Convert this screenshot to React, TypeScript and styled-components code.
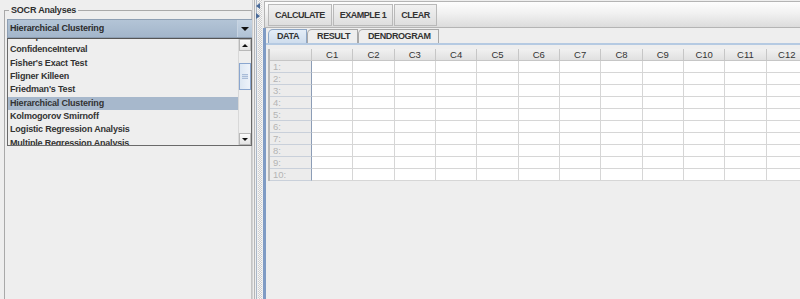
import React, { FC } from 'react';
import styled, { createGlobalStyle } from 'styled-components';

const analyses = [
  'Chi-Square Test',
  'ConfidenceInterval',
  "Fisher's Exact Test",
  'Fligner Killeen',
  "Friedman's Test",
  'Hierarchical Clustering',
  'Kolmogorov Smirnoff',
  'Logistic Regression Analysis',
  'Multiple Regression Analysis',
];

const selected = 'Hierarchical Clustering';
const actions = ['CALCULATE', 'EXAMPLE 1', 'CLEAR'];
const tabs = ['DATA', 'RESULT', 'DENDROGRAM'];
const columns = Array.from({ length: 12 }, (_, i) => `C${i + 1}`);
const rows = Array.from({ length: 10 }, (_, i) => `${i + 1}:`);

const GlobalStyle = createGlobalStyle`
  html, body {
    margin: 0;
    padding: 0;
    background: #eeeeee;
  }
  body {
    font-family: "Liberation Sans", Arial, sans-serif;
    color: #333333;
  }
`;

const App: FC = () => (
  <>
    <GlobalStyle />
    <SWindow>
      <SLeftPanel>
        <SFieldset>
          <SLegend>SOCR Analyses</SLegend>
          <SCombo>
            <SComboText>{selected}</SComboText>
            <SComboArrow>
              <SDownTriangle $size={4} />
            </SComboArrow>
          </SCombo>
          <SList>
            <SListItems>
              {analyses.map((name) => (
                <SItem key={name} $selected={name === selected}>
                  {name}
                </SItem>
              ))}
            </SListItems>
            <SScrollbar>
              <SScrollButton>
                <SUpTriangle />
              </SScrollButton>
              <STrack>
                <SThumb />
              </STrack>
              <SScrollButton>
                <SDownTriangle $size={3} />
              </SScrollButton>
            </SScrollbar>
          </SList>
        </SFieldset>
      </SLeftPanel>

      <SDivider>
        <SExpandArrow $dir="left" />
        <SExpandArrow $dir="right" />
      </SDivider>

      <SRightPanel>
        <SToolbar>
          {actions.map((a) => (
            <SButton key={a}>{a}</SButton>
          ))}
        </SToolbar>
        <STabbedPane>
          <STabStrip>
            {tabs.map((t, i) => (
              <STab key={t} $active={i === 0}>
                {t}
              </STab>
            ))}
          </STabStrip>
          <STabContent>
            <SGrid>
              <SCorner />
              {columns.map((c) => (
                <SColHeader key={c}>{c}</SColHeader>
              ))}
              {rows.map((r) => (
                <React.Fragment key={r}>
                  <SRowHeader>{r}</SRowHeader>
                  {columns.map((c) => (
                    <SCell key={c} />
                  ))}
                </React.Fragment>
              ))}
            </SGrid>
          </STabContent>
        </STabbedPane>
      </SRightPanel>
    </SWindow>
  </>
);

export default App;

const SWindow = styled.div`
  display: flex;
  width: 800px;
  height: 299px;
  overflow: hidden;
  background: #eeeeee;
`;

/* ---- left side ---- */

const SLeftPanel = styled.div`
  width: 252px;
  flex: none;
  overflow: hidden;
`;

const SFieldset = styled.fieldset`
  margin: 4px 0 0 4px;
  padding: 3px 0 0 1px;
  height: 320px;
  border: 1px solid #a9a9a9;
  border-right-color: #c4c4c4;
  min-width: 0;
`;

const SLegend = styled.legend`
  margin-left: 3px;
  padding: 0 2px;
  font-size: 9px;
  font-weight: 700;
  letter-spacing: -0.2px;
  line-height: 12px;
  color: #2e2e2e;
`;

const SCombo = styled.div`
  display: flex;
  height: 19px;
  margin-left: 1px;
  width: 246px;
  background: linear-gradient(#b3c4d6, #a3b6cb);
  box-sizing: border-box;
  border: 1px solid #8e9fb3;
`;

const SComboText = styled.div`
  flex: 1;
  padding-left: 2px;
  font-size: 9px;
  font-weight: bold;
  letter-spacing: -0.2px;
  line-height: 17px;
  color: #2c2c2c;
`;

const SComboArrow = styled.div`
  width: 14px;
  display: flex;
  align-items: center;
  justify-content: center;
  background: linear-gradient(#c5d3e2, #b0c2d5);
  border-left: 1px solid #c8d4e2;
`;

const SDownTriangle = styled.div<{ $size: number }>`
  width: 0;
  height: 0;
  border-left: ${(p) => p.$size}px solid transparent;
  border-right: ${(p) => p.$size}px solid transparent;
  border-top: ${(p) => p.$size}px solid #111111;
`;

const SUpTriangle = styled.div`
  width: 0;
  height: 0;
  border-left: 3px solid transparent;
  border-right: 3px solid transparent;
  border-bottom: 3px solid #111111;
`;

const SList = styled.div`
  display: flex;
  width: 245px;
  height: 108px;
  margin-left: 1px;
  box-sizing: border-box;
  border: 1px solid #6a6a6a;
  border-top-color: #555555;
  background: #eeeeee;
  overflow: hidden;
`;

const SListItems = styled.div`
  flex: 1;
  overflow: hidden;
`;

const SItem = styled.div<{ $selected: boolean }>`
  height: 13.33px;
  padding-left: 2px;
  font-size: 9px;
  font-weight: bold;
  letter-spacing: -0.2px;
  line-height: 13.33px;
  color: #333333;
  white-space: nowrap;
  background: ${(p) => (p.$selected ? '#a7b8cc' : 'transparent')};

  &:first-child {
    margin-top: -9px;
  }
`;

const SScrollbar = styled.div`
  width: 12px;
  display: flex;
  flex-direction: column;
  background: #eeeeee;
  border-left: 1px solid #d8d8d8;
`;

const SScrollButton = styled.div`
  height: 12px;
  box-sizing: border-box;
  display: flex;
  align-items: center;
  justify-content: center;
  background: linear-gradient(#fbfbfb, #e4e4e4);
  border: 1px solid #b8b8b8;
`;

const STrack = styled.div`
  flex: 1;
  padding-top: 12px;
`;

const SThumb = styled.div`
  position: relative;
  height: 27px;
  box-sizing: border-box;
  background: linear-gradient(90deg, #dde7f3, #eef3fa);
  border: 1px solid #8aa6cf;

  &::after {
    content: '';
    position: absolute;
    left: 2px;
    right: 2px;
    top: 10px;
    height: 5px;
    background: repeating-linear-gradient(#a9bcd8 0 1px, #d4dfee 1px 2px);
  }
`;

/* ---- split pane divider ---- */

const SDivider = styled.div`
  width: 11px;
  flex: none;
  display: flex;
  flex-direction: column;
  align-items: center;
  gap: 4px;
  padding-top: 3px;
  box-sizing: border-box;
  background:
    linear-gradient(90deg,
      #d2d2d2 0 1px,
      #eeeeee 1px 2px,
      #b6b6b6 2px 3px,
      #eeeeee 3px 4px,
      #aab7c8 4px 5px,
      #eeeeee 5px 6px,
      transparent 6px 10px,
      #eeeeee 10px 11px),
    repeating-conic-gradient(#cfcfcf 0 25%, #f6f6f6 0 50%) 0 0 / 2px 2px;
`;

const SExpandArrow = styled.div<{ $dir: 'left' | 'right' }>`
  width: 0;
  height: 0;
  border-top: 3px solid transparent;
  border-bottom: 3px solid transparent;
  ${(p) =>
    p.$dir === 'left'
      ? 'border-right: 4px solid #4a6a98;'
      : 'border-left: 4px solid #4a6a98;'}
`;

/* ---- right side ---- */

const SRightPanel = styled.div`
  flex: 1;
  min-width: 0;
  display: flex;
  flex-direction: column;
  padding-top: 1px;
  overflow: hidden;
`;

const SToolbar = styled.div`
  display: flex;
  gap: 1px;
  margin-left: 1px;
  padding: 2px 3px 1px 3px;
  border: 1px solid #b4b4b4;
  border-right: none;
  background: linear-gradient(#fdfdfd, #f1f1f1 45%, #dcdcdc);
`;

const SButton = styled.div`
  height: 22px;
  box-sizing: border-box;
  padding: 0 6px;
  font-size: 9px;
  font-weight: bold;
  letter-spacing: -0.5px;
  line-height: 20px;
  color: #333333;
  border: 1px solid #b9b9b9;
  background: linear-gradient(#f1f1f1, #dedede);
`;

const STabbedPane = styled.div`
  flex: 1;
  display: flex;
  flex-direction: column;
  border-left: 3px solid #7f9bc4;
`;

const STabStrip = styled.div`
  display: flex;
  align-items: flex-end;
  height: 15px;
  padding-left: 2px;
`;

const STab = styled.div<{ $active: boolean }>`
  height: 14px;
  box-sizing: border-box;
  padding: 0 7px 0 ${(p) => (p.$active ? 8 : 9)}px;
  font-size: 9px;
  font-weight: bold;
  letter-spacing: -0.4px;
  line-height: 13px;
  color: #333333;
  border: 1px solid ${(p) => (p.$active ? '#8fa7c5' : '#a8a8a8')};
  border-bottom: none;
  border-top-left-radius: 5px;
  background: ${(p) => (p.$active ? 'linear-gradient(#e4edf7, #cfdded)' : '#eeeeee')};

  & + & {
    margin-left: 0;
  }
`;

const STabContent = styled.div`
  flex: 1;
  border-top: 2px solid #b5cae2;
  padding: 4px 0 0 2px;
`;

const SGrid = styled.div`
  display: grid;
  grid-template-columns: 42px repeat(12, 41.33px);
  grid-auto-rows: 12px;
  border-left: 2px solid #b9b9b9;
  width: max-content;
`;

const SCorner = styled.div`
  background: linear-gradient(#f1f1f1, #e0e0e0);
  border-right: 1px solid #c6c6c6;
  border-bottom: 1px solid #c6c6c6;
`;

const SColHeader = styled.div`
  box-sizing: border-box;
  font-size: 9.5px;
  line-height: 11px;
  text-align: center;
  color: #333333;
  background: linear-gradient(#f1f1f1, #e0e0e0);
  border-right: 1px solid #c6c6c6;
  border-bottom: 1px solid #c6c6c6;
`;

const SRowHeader = styled.div`
  box-sizing: border-box;
  padding-left: 3px;
  font-size: 9.5px;
  line-height: 12px;
  color: #b4b4b4;
  background: #ececec;
  border-right: 1px solid #8c9db6;
  border-bottom: 1px solid #c9d0da;
`;

const SCell = styled.div`
  box-sizing: border-box;
  background: #ffffff;
  border-right: 1px solid #d6d6d6;
  border-bottom: 1px solid #d6d6d6;
`;
